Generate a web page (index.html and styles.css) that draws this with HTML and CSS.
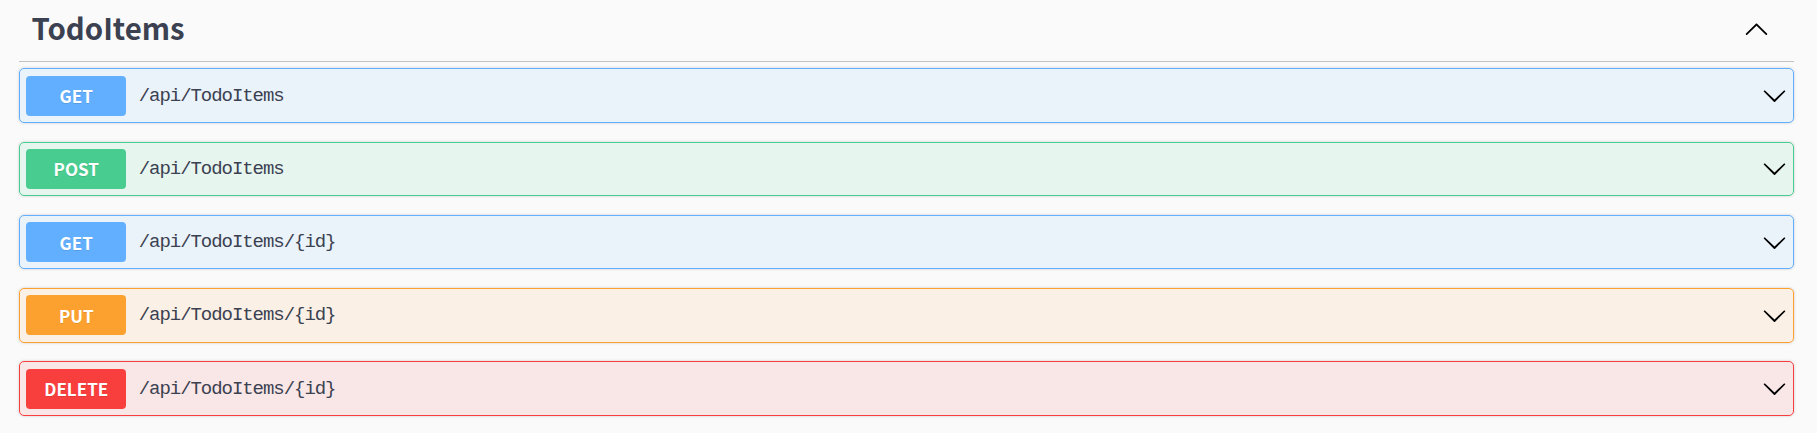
FILE: index.html
```html
<!DOCTYPE html>
<html lang="en">
<head>
<meta charset="utf-8">
<title>TodoItems</title>
<link rel="stylesheet" href="styles.css">
</head>
<body>
<div class="wrapper">
  <section class="tag-section">
    <div class="tag-header">
      <h4 class="tag-title">TodoItems</h4>
      <button class="expand" aria-label="Collapse">
        <svg class="arrow" viewBox="0 0 20 20" width="25" height="25"><path d="M17.418 14.908c.272.268.709.268.979 0s.271-.701 0-.969l-7.908-7.830c-.27-.268-.707-.268-.979 0l-7.908 7.830c-.27.268-.27.701 0 .969.271.268.709.268.979 0L10 7.767l7.418 7.141z"/></svg>
      </button>
    </div>

    <div class="opblock get">
      <span class="method">GET</span>
      <span class="path">/api/TodoItems</span>
      <svg class="arrow" viewBox="0 0 20 20" width="25" height="25"><path d="M17.418 6.109c.272-.268.709-.268.979 0s.271.701 0 .969l-7.908 7.83c-.27.268-.707.268-.979 0l-7.908-7.83c-.27-.268-.27-.701 0-.969.271-.268.709-.268.979 0L10 13.25l7.418-7.141z"/></svg>
    </div>

    <div class="opblock post">
      <span class="method">POST</span>
      <span class="path">/api/TodoItems</span>
      <svg class="arrow" viewBox="0 0 20 20" width="25" height="25"><path d="M17.418 6.109c.272-.268.709-.268.979 0s.271.701 0 .969l-7.908 7.83c-.27.268-.707.268-.979 0l-7.908-7.83c-.27-.268-.27-.701 0-.969.271-.268.709-.268.979 0L10 13.25l7.418-7.141z"/></svg>
    </div>

    <div class="opblock get">
      <span class="method">GET</span>
      <span class="path">/api/TodoItems/{id}</span>
      <svg class="arrow" viewBox="0 0 20 20" width="25" height="25"><path d="M17.418 6.109c.272-.268.709-.268.979 0s.271.701 0 .969l-7.908 7.83c-.27.268-.707.268-.979 0l-7.908-7.83c-.27-.268-.27-.701 0-.969.271-.268.709-.268.979 0L10 13.25l7.418-7.141z"/></svg>
    </div>

    <div class="opblock put">
      <span class="method">PUT</span>
      <span class="path">/api/TodoItems/{id}</span>
      <svg class="arrow" viewBox="0 0 20 20" width="25" height="25"><path d="M17.418 6.109c.272-.268.709-.268.979 0s.271.701 0 .969l-7.908 7.83c-.27.268-.707.268-.979 0l-7.908-7.83c-.27-.268-.27-.701 0-.969.271-.268.709-.268.979 0L10 13.25l7.418-7.141z"/></svg>
    </div>

    <div class="opblock delete">
      <span class="method">DELETE</span>
      <span class="path">/api/TodoItems/{id}</span>
      <svg class="arrow" viewBox="0 0 20 20" width="25" height="25"><path d="M17.418 6.109c.272-.268.709-.268.979 0s.271.701 0 .969l-7.908 7.83c-.27.268-.707.268-.979 0l-7.908-7.83c-.27-.268-.27-.701 0-.969.271-.268.709-.268.979 0L10 13.25l7.418-7.141z"/></svg>
    </div>
  </section>
</div>
</body>
</html>
```
FILE: styles.css
```css
html, body {
  margin: 0;
  padding: 0;
  background: #fafafa;
}

body {
  font-family: "Noto Sans CJK SC", "Noto Sans", sans-serif;
  color: #3b4151;
}

.wrapper {
  padding: 0 23px 0 19px;
}

.tag-header {
  display: flex;
  align-items: center;
  box-sizing: content-box;
  height: 56px;
  padding: 0 25px 5px 12.5px;
  border-bottom: 1px solid rgba(59, 65, 81, 0.3);
  margin-bottom: 6.25px;
}

.tag-title {
  flex: 1;
  margin: 0;
  font-size: 29.4px;
  line-height: 29.4px;
  font-weight: 700;
  color: #3b4151;
}

.expand {
  display: flex;
  align-items: center;
  justify-content: center;
  padding: 0;
  margin: 0;
  border: 0;
  background: none;
  width: 25px;
  height: 25px;
}

.arrow {
  display: block;
  fill: #000;
  flex: none;
}

.opblock {
  display: flex;
  align-items: center;
  padding: 6.25px;
  border: 1px solid #000;
  border-radius: 5px;
  box-shadow: 0 0 3px rgba(0, 0, 0, 0.19);
  margin-bottom: 18.75px;
}

.method {
  flex: none;
  width: 100px;
  height: 40px;
  display: flex;
  align-items: center;
  justify-content: center;
  border-radius: 4px;
  color: #fff;
  font-family: "Noto Sans CJK SC", "Noto Sans", sans-serif;
  font-size: 17px;
  font-weight: 700;
  text-shadow: 0 1px 0 rgba(0, 0, 0, 0.1);
}

.path {
  flex: 1;
  padding: 0 12.5px;
  font-family: "Liberation Mono", "Courier New", monospace;
  font-size: 19px;
  letter-spacing: -1.05px;
  color: #3b4151;
}

.get { background: rgba(97, 175, 254, 0.1); border-color: #61affe; }
.get .method { background: #61affe; }

.post { background: rgba(73, 204, 144, 0.1); border-color: #49cc90; }
.post .method { background: #49cc90; }

.put { background: rgba(252, 161, 48, 0.1); border-color: #fca130; }
.put .method { background: #fca130; }

.delete { background: rgba(249, 62, 62, 0.1); border-color: #f93e3e; }
.delete .method { background: #f93e3e; }
```
